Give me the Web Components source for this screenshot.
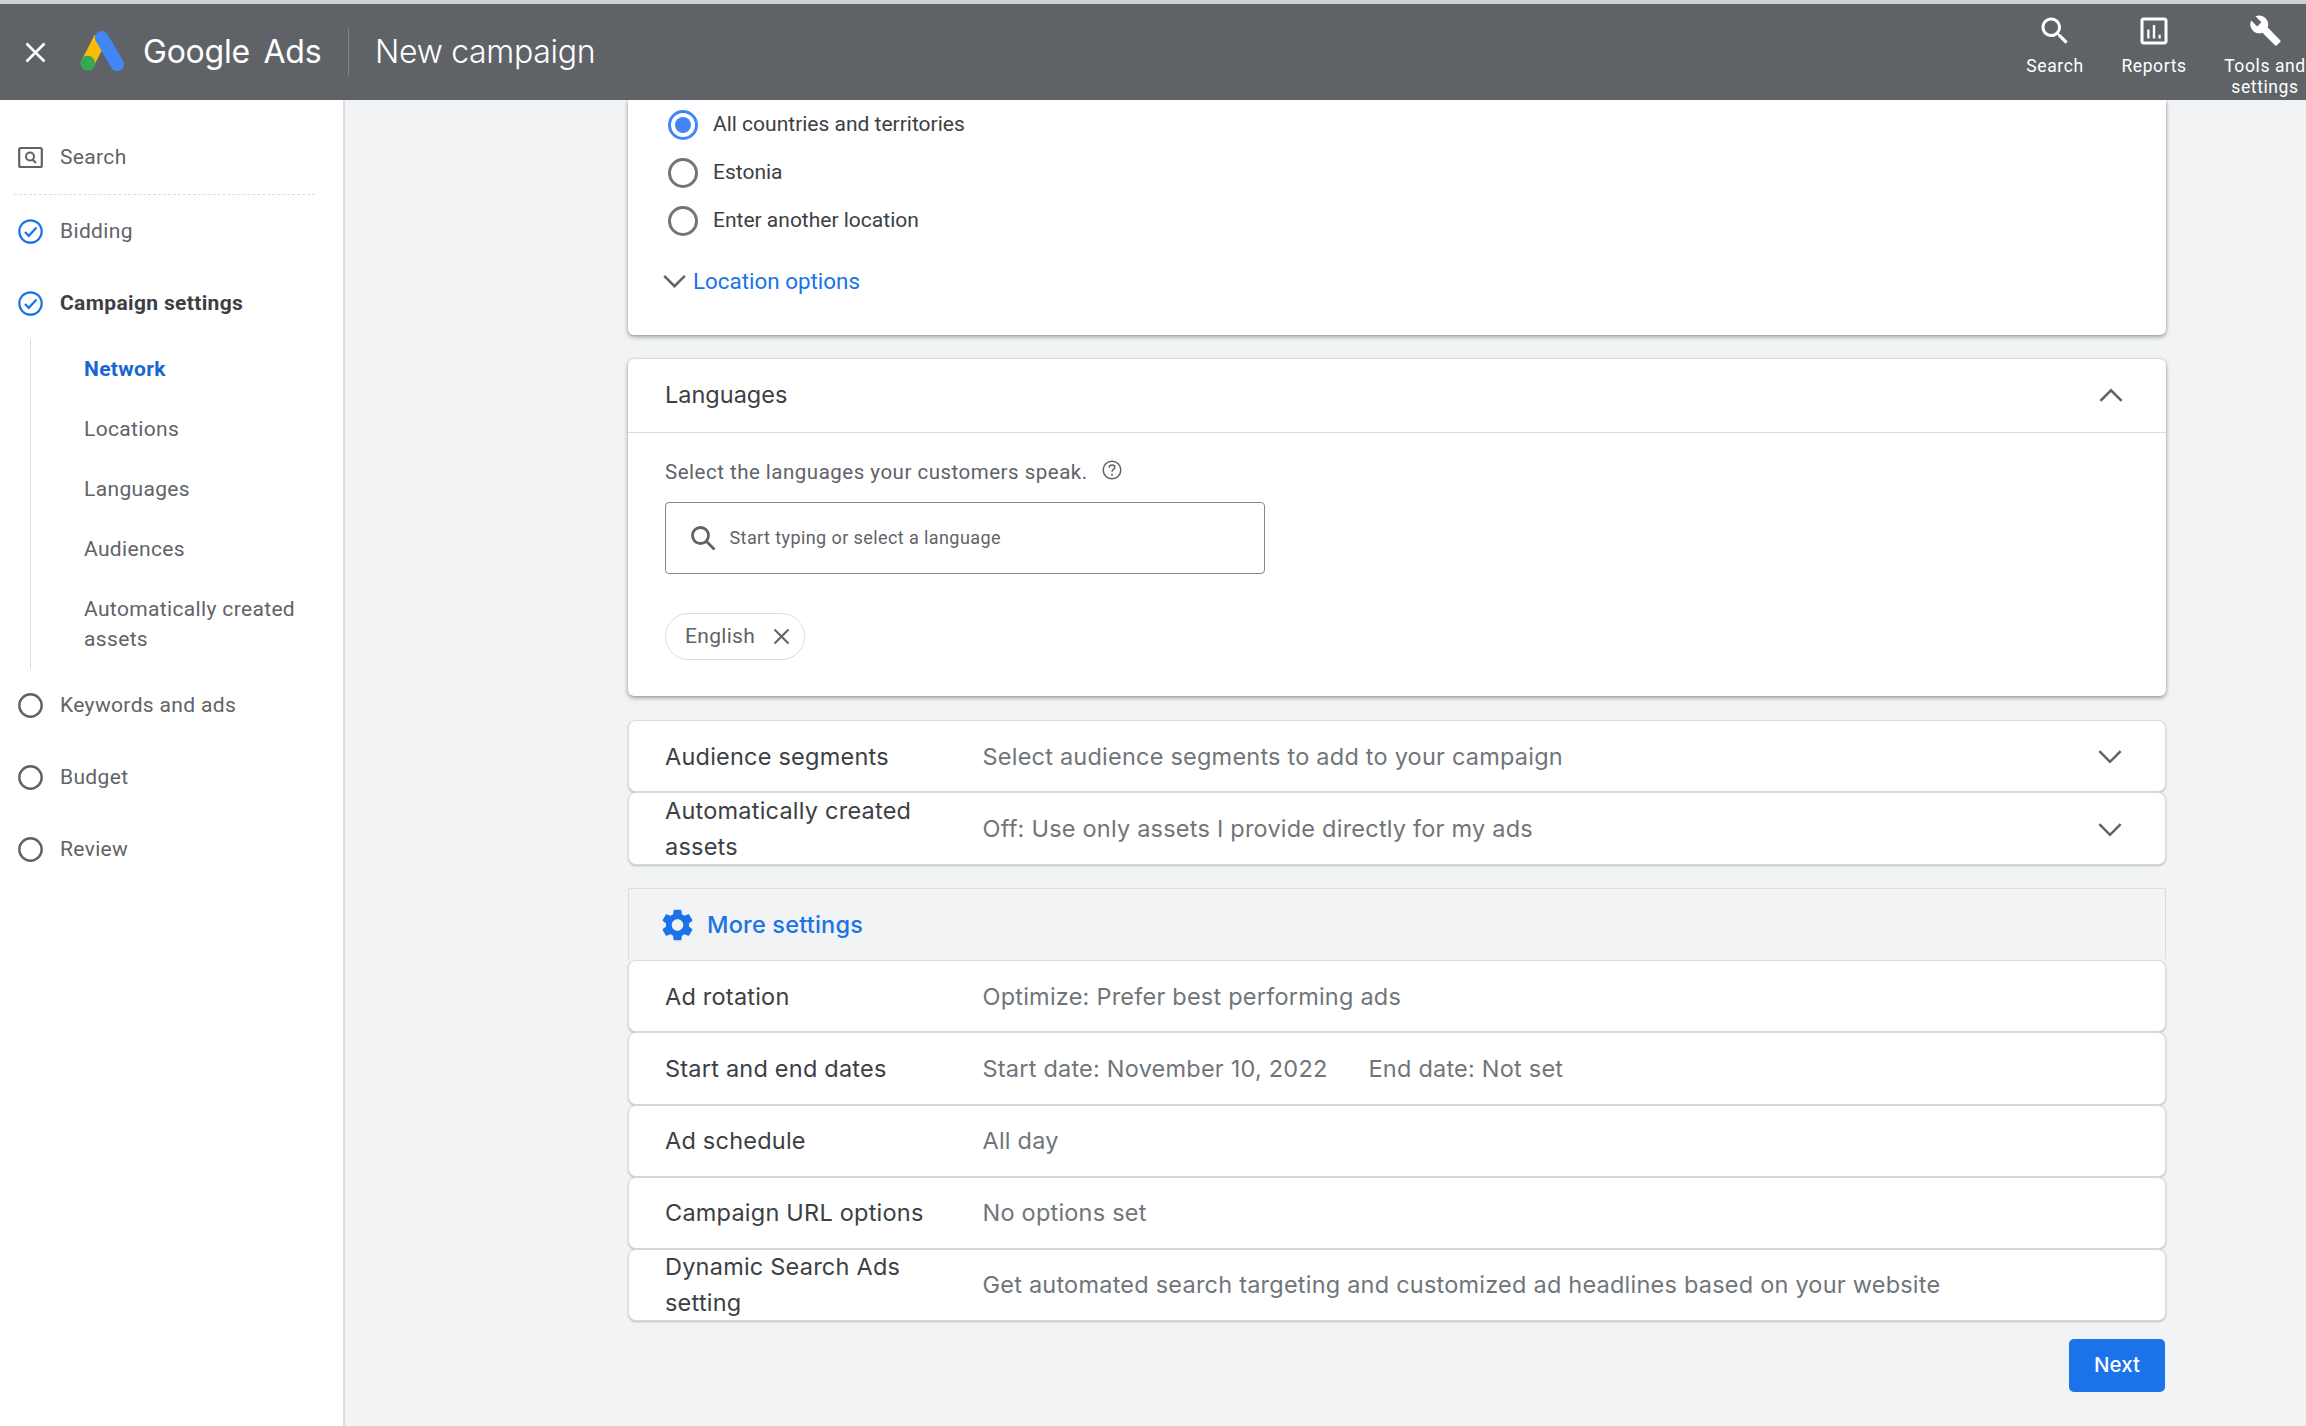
<!DOCTYPE html>
<html lang="en">
<head>
<meta charset="utf-8">
<title>New campaign</title>
<style>
  html, body { margin: 0; height: 100%; }
  body { font-family: Roboto, sans-serif; background: #f1f3f4; overflow: hidden; }
  .page { display: flex; flex-direction: column; height: 100vh; }
  .under { display: flex; flex: 1; min-height: 0; }
</style>
</head>
<body>
<div class="page">
  <ads-topbar title-text="New campaign">
    <ads-tool label="Search" slot="tools" style="width:60px">
      <svg viewBox="0 0 24 24" width="36" height="36" fill="#fff"><path d="M15.5 14h-.79l-.28-.27C15.41 12.59 16 11.11 16 9.5 16 5.91 13.09 3 9.5 3S3 5.91 3 9.5 5.91 16 9.5 16c1.61 0 3.09-.59 4.23-1.57l.27.28v.79l5 4.99L20.49 19l-4.99-5zm-6 0C7.01 14 5 11.99 5 9.5S7.01 5 9.5 5 14 7.01 14 9.5 11.99 14 9.5 14z"/></svg>
    </ads-tool>
    <ads-tool label="Reports" slot="tools" style="width:66px;margin-left:36px">
      <svg viewBox="0 0 24 24" width="36" height="36" fill="#fff"><path d="M19 3H5c-1.1 0-2 .9-2 2v14c0 1.100.9 2 2 2h14c1.100 0 2-.9 2-2V5c0-1.100-.9-2-2-2zm0 16H5V5h14v14z"/><path d="M7.500 11h1.500v6H7.500zM11.200 8h1.600v9h-1.600zM15 14.500h1.500V17H15z"/></svg>
    </ads-tool>
    <ads-tool label="Tools and settings" slot="tools" style="width:82px;margin-left:37px">
      <svg viewBox="0 0 24 24" width="33" height="33" fill="#fff"><path d="M22.700 19l-9.100-9.100c.9-2.300.4-5-1.500-6.900-2-2-5-2.400-7.400-1.300L9 6 6 9 1.600 4.700C.4 7.100.9 10.100 2.900 12.100c1.900 1.900 4.600 2.400 6.900 1.500l9.100 9.100c.4.4 1 .4 1.400 0l2.300-2.300c.5-.4.5-1.100.1-1.400z"/></svg>
    </ads-tool>
  </ads-topbar>
  <div class="under">
    <ads-sidenav>
      <ads-step state="search" divider>Search</ads-step>
      <ads-step state="done">Bidding</ads-step>
      <ads-step state="done" current>Campaign settings</ads-step>
      <ads-sublist>
        <ads-subitem active>Network</ads-subitem>
        <ads-subitem>Locations</ads-subitem>
        <ads-subitem>Languages</ads-subitem>
        <ads-subitem>Audiences</ads-subitem>
        <ads-subitem>Automatically created assets</ads-subitem>
      </ads-sublist>
      <ads-step state="todo">Keywords and ads</ads-step>
      <ads-step state="todo">Budget</ads-step>
      <ads-step state="todo">Review</ads-step>
    </ads-sidenav>
    <ads-main>
      <ads-location-card></ads-location-card>
      <ads-language-card></ads-language-card>
      <ads-group>
        <ads-row heading="Audience segments" chevron>Select audience segments to add to your campaign</ads-row>
        <ads-row heading="Automatically created assets" chevron>Off: Use only assets I provide directly for my ads</ads-row>
      </ads-group>
      <ads-group>
        <ads-more-settings>More settings</ads-more-settings>
        <ads-row tight heading="Ad rotation">Optimize: Prefer best performing ads</ads-row>
        <ads-row tight heading="Start and end dates"><span style="margin-right:41px">Start date: November 10, 2022</span>End date: Not set</ads-row>
        <ads-row tight heading="Ad schedule">All day</ads-row>
        <ads-row tight heading="Campaign URL options">No options set</ads-row>
        <ads-row tight heading="Dynamic Search Ads setting">Get automated search targeting and customized ad headlines based on your website</ads-row>
      </ads-group>
      <ads-button>Next</ads-button>
    </ads-main>
  </div>
</div>
<script>
const HEAD_FONT = `Inter, "Open Sans", sans-serif`;
const CHEVRON = (up) => `<svg viewBox="0 0 24 16" width="26" height="17" fill="none" stroke="#5f6368" stroke-width="2.4"><path d="${up ? 'M2 14L12 4l10 10' : 'M2 3l10 10L22 3'}"/></svg>`;

function define(name, html, extra = {}) {
  const cls = class extends HTMLElement {
    constructor() {
      super();
      this.attachShadow({ mode: 'open' });
      this.shadowRoot.innerHTML = html(this);
    }
    connectedCallback() { if (extra.connected) extra.connected(this); }
  };
  customElements.define(name, cls);
}

define('ads-topbar', () => `
  <style>
    :host { display: flex; flex: none; height: 96px; border-top: 4px solid #cfd0d2; background: #5f6368; color: #fff; align-items: stretch; position: relative; z-index: 2; }
    .left { display: flex; align-items: center; flex: 1; }
    .close { margin-left: 25px; width: 21px; height: 21px; flex: none; }
    .logo { margin: -2px 0 0 34px; width: 44px; height: 40px; flex: none; }
    .brand { margin-left: 19px; font: 400 32px/1 ${HEAD_FONT}; width: 205px; white-space: nowrap; letter-spacing: -.25px; word-spacing: 5px; }
    .sep { width: 1px; height: 48px; background: #80868b; flex: none; }
    .title { margin-left: 26px; font: 300 32px/1 ${HEAD_FONT}; letter-spacing: -.3px; white-space: nowrap; }
    .tools { display: flex; }
  </style>
  <div class="left">
    <svg class="close" viewBox="0 0 21 21" stroke="#fff" stroke-width="2.600"><path d="M1.500 1.500l18 18M19.500 1.500l-18 18"/></svg>
    <svg class="logo" viewBox="0 0 44 40">
      <path d="M7.700 32.300L20.500 7" stroke="#fbbc04" stroke-width="13.500" fill="none"/>
      <path d="M21.700 6.700L37.300 33.500" stroke="#4285f4" stroke-width="13.500" stroke-linecap="round" fill="none"/>
      <circle cx="7.700" cy="32.300" r="7.500" fill="#34a853"/>
    </svg>
    <span class="brand">Google Ads</span>
    <span class="sep"></span>
    <span class="title"></span>
  </div>
  <div class="tools"><slot name="tools"></slot></div>
`, { connected(el) { el.shadowRoot.querySelector('.title').textContent = el.getAttribute('title-text'); } });

define('ads-tool', () => `
  <style>
    :host { display: block; text-align: center; color: #fff; padding-top: 8.500px; }
    .icon { height: 36px; display: flex; justify-content: center; align-items: center; }
    .label { margin: 7px -12px 0; font: 400 17.500px/21px Roboto, sans-serif; letter-spacing: .6px; }
    ::slotted(svg) { display: block; }
  </style>
  <div class="icon"><slot></slot></div>
  <div class="label"></div>
`, { connected(el) {
  const label = el.getAttribute('label');
  el.shadowRoot.querySelector('.label').innerHTML = label === 'Tools and settings' ? 'Tools and<br>settings' : label;
} });

define('ads-sidenav', () => `
  <style>
    :host { display: block; flex: none; width: 343px; box-sizing: content-box; background: #fff; border-right: 2px solid #dadce0; padding-top: 20px; }
  </style>
  <slot></slot>
`);

define('ads-step', () => `
  <style>
    :host { display: flex; align-items: center; height: 72px; padding-left: 17.500px; font: 400 21px/30px Roboto, sans-serif; letter-spacing: .35px; color: #5f6368; position: relative; }
    :host([current]) { color: #3c4043; font-weight: 700; }
    :host([divider]) { height: 74.500px; margin-bottom: .5px; }
    :host([divider])::after { content: ""; position: absolute; left: 14px; right: 28px; bottom: 0; border-bottom: 1.500px dashed #dadce0; }
    svg { width: 25px; height: 25px; margin-right: 17.500px; flex: none; display: block; }
  </style>
  <svg viewBox="0 0 25 25" fill="none"></svg><slot></slot>
`, { connected(el) {
  const svg = el.shadowRoot.querySelector('svg');
  const state = el.getAttribute('state');
  if (state === 'search') {
    svg.innerHTML = '<rect x="1.200" y="3" width="22.600" height="19" rx="1.500" stroke="#5f6368" stroke-width="2.200"/><circle cx="12" cy="11.500" r="4" stroke="#5f6368" stroke-width="2"/><path d="M14.500 14.500l3.500 3.500" stroke="#5f6368" stroke-width="2"/>';
  } else if (state === 'done') {
    svg.innerHTML = '<circle cx="12.500" cy="12.500" r="11.200" stroke="#1a73e8" stroke-width="2.200"/><path d="M7 13l3.800 3.800L18.500 8.500" stroke="#1a73e8" stroke-width="2.200"/>';
  } else {
    svg.innerHTML = '<circle cx="12.500" cy="12.500" r="11.200" stroke="#5f6368" stroke-width="2.400"/>';
  }
} });

define('ads-sublist', () => `
  <style>
    :host { display: block; margin-left: 30px; padding-left: 53px; border-left: 1.500px solid #dadce0; }
  </style>
  <slot></slot>
`);

define('ads-subitem', () => `
  <style>
    :host { display: block; padding: 15px 0; width: 240px; font: 400 21px/30px Roboto, sans-serif; letter-spacing: .35px; color: #5f6368; }
    :host([active]) { color: #1967d2; font-weight: 700; }
  </style>
  <slot></slot>
`);

define('ads-main', () => `
  <style>
    :host { display: flex; flex-direction: column; flex: 1; min-width: 0; padding: 0 140px 0 283px; gap: 23.500px; }
  </style>
  <slot></slot>
`);

define('ads-radio', () => `
  <style>
    :host { display: flex; align-items: center; height: 48px; font: 400 21px/30px Roboto, sans-serif; color: #3c4043; }
    .dot { width: 24px; height: 24px; border: 3px solid #70757a; border-radius: 50%; margin-right: 15px; flex: none; display: flex; align-items: center; justify-content: center; position: relative; top: 1px; }
    :host([checked]) .dot { border-color: #4285f4; }
    :host([checked]) .dot::after { content: ""; width: 16px; height: 16px; border-radius: 50%; background: #4285f4; }
  </style>
  <span class="dot"></span><slot></slot>
`);

define('ads-location-card', () => `
  <style>
    :host { display: block; flex: none; height: 235px; box-sizing: border-box; background: #fff; border-radius: 0 0 6px 6px; box-shadow: 0 2px 4px rgba(60,64,67,.45), 0 0 2px rgba(60,64,67,.25); padding-left: 40px; }
    .opts { display: flex; align-items: center; margin: 19px 0 0 -5px; height: 36px; font: 400 22.400px/36px Roboto, sans-serif; color: #1a73e8; }
    .opts svg { margin-right: 7px; }
  </style>
  <ads-radio checked>All countries and territories</ads-radio>
  <ads-radio>Estonia</ads-radio>
  <ads-radio>Enter another location</ads-radio>
  <div class="opts"><svg viewBox="0 0 24 16" width="23" height="15" fill="none" stroke="#5f6368" stroke-width="2.600"><path d="M1 2l11 11L23 2"/></svg>Location options</div>
`);

define('ads-language-card', () => `
  <style>
    :host { display: block; flex: none; box-sizing: border-box; background: #fff; border-radius: 6px; box-shadow: 0 2px 4px rgba(60,64,67,.45), 0 0 2px rgba(60,64,67,.25); }
    .head { display: flex; align-items: center; justify-content: space-between; height: 74.500px; box-sizing: border-box; border-bottom: 1.500px solid #dadce0; padding: 0 42px 0 37px; font: 400 23.500px/30px ${HEAD_FONT}; color: #3c4043; }
    .body { padding: 23.500px 37px 36.500px; }
    .desc { display: flex; align-items: center; font: 400 20.500px/30px Roboto, sans-serif; letter-spacing: .5px; color: #5f6368; }
    .desc svg { margin: -4px 0 0 14px; }
    .input { display: flex; align-items: center; box-sizing: border-box; width: 600px; height: 72px; margin-top: 15px; border: 1.500px solid #80868b; border-radius: 4px; padding-left: 23.500px; font: 400 18px/24px Roboto, sans-serif; letter-spacing: .41px; color: #5f6368; }
    .input svg { margin-right: 14px; }
    .chip { display: inline-flex; align-items: center; box-sizing: border-box; height: 47px; margin-top: 39px; border: 1.500px solid #dadce0; border-radius: 24px; padding: 0 14px 0 19px; font: 400 21px/30px Roboto, sans-serif; letter-spacing: .3px; color: #5f6368; }
    .chip svg { margin-left: 18px; }
    .chevron { display: block; }
  </style>
  <div class="head">Languages<span class="chevron">${CHEVRON(true)}</span></div>
  <div class="body">
    <div class="desc">Select the languages your customers speak.
      <svg viewBox="0 0 20 20" width="20" height="20" fill="none"><circle cx="10" cy="10" r="8.800" stroke="#5f6368" stroke-width="1.500"/><path d="M7.300 7.800c0-1.600 1.200-2.700 2.800-2.700s2.700 1 2.700 2.400c0 1.900-2.800 2-2.800 4.300" stroke="#5f6368" stroke-width="1.500"/><circle cx="10" cy="14.800" r="1" fill="#5f6368"/></svg>
    </div>
    <div class="input">
      <svg viewBox="0 0 26 26" width="26" height="26" fill="none" stroke="#5f6368" stroke-width="2.800"><circle cx="10.500" cy="10.500" r="8"/><path d="M16 16l8.500 8.500"/></svg>
      Start typing or select a language
    </div>
    <div class="chip">English<svg viewBox="0 0 17 17" width="17" height="17" stroke="#5f6368" stroke-width="2"><path d="M1.500 1.500l14 14M15.500 1.500l-14 14"/></svg></div>
  </div>
`);

define('ads-group', () => `
  <style>
    :host { display: flex; flex-direction: column; flex: none; }
  </style>
  <slot></slot>
`);

define('ads-row', () => `
  <style>
    :host { display: flex; align-items: center; flex: none; height: 72.500px; box-sizing: border-box; background: #fff; border: 1.500px solid #d9dadc; border-radius: 8px; box-shadow: 0 1px 2px rgba(60,64,67,.3); padding: 2px 42px 0 36px; font: 400 23.500px/36px ${HEAD_FONT}; letter-spacing: .22px; }
    :host([tight]) { height: 72.200px; padding-top: .5px; }
    .heading { flex: none; width: 317.500px; padding-right: 40px; box-sizing: border-box; color: #3c4043; }
    .value { flex: 1; min-width: 0; color: #70757a; white-space: nowrap; }
    svg { display: block; }
  </style>
  <div class="heading"></div><div class="value"><slot></slot></div><span class="chev"></span>
`, { connected(el) {
  el.shadowRoot.querySelector('.heading').textContent = el.getAttribute('heading');
  if (el.hasAttribute('chevron')) el.shadowRoot.querySelector('.chev').innerHTML = CHEVRON(false);
} });

define('ads-more-settings', () => `
  <style>
    :host { display: flex; align-items: center; flex: none; height: 72.200px; box-sizing: border-box; background: #f1f3f4; border: 1.500px solid #dadce0; border-bottom: 0; border-radius: 2px; padding: 0 0 0 33px; font: 500 23.500px/36px ${HEAD_FONT}; letter-spacing: .2px; color: #1a73e8; }
    svg { margin-right: 14px; }
  </style>
  <svg viewBox="2.500 2 19 20" width="31" height="32" fill="#1a73e8"><path d="M19.140 12.940c.04-.3.06-.61.06-.94 0-.32-.02-.64-.07-.94l2.030-1.580c.18-.14.23-.41.12-.61l-1.920-3.320c-.12-.22-.37-.29-.59-.22l-2.390.96c-.5-.38-1.030-.7-1.620-.94l-.36-2.540c-.04-.24-.24-.41-.48-.41h-3.840c-.24 0-.43.17-.47.41l-.36 2.540c-.59.24-1.130.57-1.620.94l-2.390-.96c-.22-.08-.47 0-.59.22L2.740 8.870c-.12.21-.08.47.12.61l2.030 1.580c-.05.3-.09.63-.09.94s.02.64.07.94l-2.030 1.580c-.18.14-.23.41-.12.61l1.920 3.320c.12.22.37.29.59.22l2.390-.96c.5.38 1.030.7 1.620.94l.36 2.540c.05.24.24.41.48.41h3.840c.24 0 .44-.17.47-.41l.36-2.540c.59-.24 1.130-.56 1.620-.94l2.390.96c.22.08.47 0 .59-.22l1.920-3.320c.12-.22.07-.47-.12-.61l-2.010-1.580zM12 15.600c-1.980 0-3.600-1.620-3.600-3.600s1.620-3.600 3.600-3.600 3.600 1.620 3.600 3.600-1.620 3.600-3.600 3.600z"/></svg><slot></slot>
`);

define('ads-button', () => `
  <style>
    :host { display: flex; align-items: center; justify-content: center; align-self: flex-end; flex: none; width: 96px; height: 53px; margin: -5.500px 1px 0 0; background: #1a73e8; border-radius: 5px; color: #fff; font: 500 20.500px/1 ${HEAD_FONT}; }
  </style>
  <slot></slot>
`);
</script>
</body>
</html>
